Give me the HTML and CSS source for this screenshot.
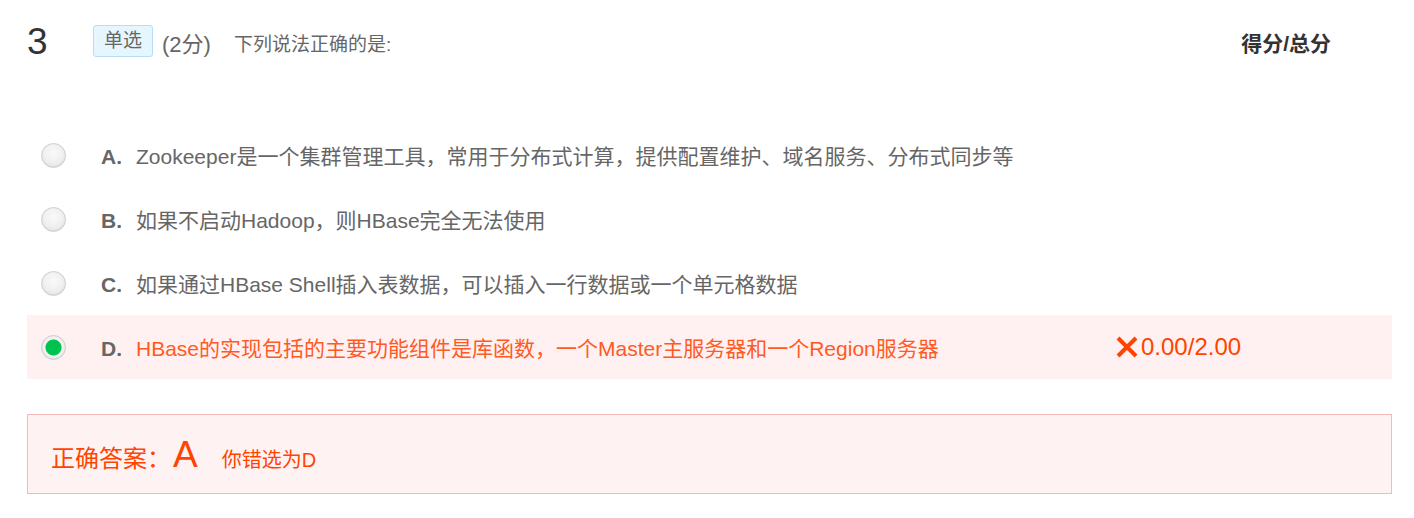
FILE: index.html
```html
<!DOCTYPE html>
<html lang="zh">
<head>
<meta charset="utf-8">
<link rel="stylesheet" href="styles.css">
</head>
<body>
<div class="question">
  <div class="q-head">
    <span class="q-num">3</span>
    <span class="q-tag">单选</span>
    <span class="q-score">(2分)</span>
    <span class="q-title">下列说法正确的是:</span>
    <span class="q-total">得分/总分</span>
  </div>
  <ul class="options">
    <li class="option">
      <span class="radio"></span>
      <span class="opt-body">
        <span class="opt-letter">A.</span>
        <span class="opt-text">Zookeeper是一个集群管理工具，常用于分布式计算，提供配置维护、域名服务、分布式同步等</span>
      </span>
    </li>
    <li class="option">
      <span class="radio"></span>
      <span class="opt-body">
        <span class="opt-letter">B.</span>
        <span class="opt-text">如果不启动Hadoop，则HBase完全无法使用</span>
      </span>
    </li>
    <li class="option">
      <span class="radio"></span>
      <span class="opt-body">
        <span class="opt-letter">C.</span>
        <span class="opt-text">如果通过HBase Shell插入表数据，可以插入一行数据或一个单元格数据</span>
      </span>
    </li>
    <li class="option option-wrong">
      <span class="radio radio-checked"></span>
      <span class="opt-body">
        <span class="opt-letter">D.</span>
        <span class="opt-text">HBase的实现包括的主要功能组件是库函数，一个Master主服务器和一个Region服务器</span>
      </span>
      <span class="opt-result">
        <svg class="x-icon" width="24" height="22" viewBox="0 0 24 22"><path d="M3 2 L21 20 M21 2 L3 20" stroke="#ff4400" stroke-width="4" fill="none"/></svg>0.00/2.00
      </span>
    </li>
  </ul>
  <div class="answer">
    <span class="ans-label">正确答案：</span>
    <span class="ans-value">A</span>
    <span class="ans-note">你错选为D</span>
  </div>
</div>
</body>
</html>
```
FILE: styles.css
```css
* { box-sizing: border-box; }
body {
  margin: 0;
  background: #fff;
  font-family: "Liberation Sans", Arial, "Noto Sans CJK SC", sans-serif;
  color: #666;
}
.question {
  width: 1392px;
  padding: 22px 0 0 27px;
}
.q-head {
  display: flex;
  align-items: center;
  height: 40px;
}
.q-num {
  font-size: 37px;
  color: #333;
  width: 66px;
  line-height: 40px;
}
.q-tag {
  height: 32px;
  line-height: 30px;
  padding: 0 10px;
  font-size: 19px;
  color: #666;
  background: #e6f6fe;
  border: 1px solid #b7def4;
  border-radius: 3px;
  margin-top: -2px;
}
.q-score {
  font-size: 22px;
  color: #666;
  margin-left: 9px;
}
.q-title {
  font-size: 19px;
  color: #666;
  margin-left: 23px;
}
.q-total {
  font-size: 21px;
  font-weight: bold;
  color: #333;
  margin-left: auto;
  margin-right: 61px;
}
.options {
  list-style: none;
  margin: 61px 0 0;
  padding: 0;
}
.option {
  display: flex;
  align-items: center;
  height: 64px;
  padding-left: 14px;
}
.option-wrong {
  background: #fff1f1;
}
.radio {
  width: 25px;
  height: 25px;
  border-radius: 50%;
  border: 1px solid #cfcfcf;
  background: radial-gradient(circle at 50% 40%, #fafafa 0%, #ececec 70%, #e0e0e0 100%);
  box-shadow: inset 0 -1px 2px rgba(0,0,0,0.08);
  flex: 0 0 25px;
}
.radio-checked {
  background: radial-gradient(circle, #00c24e 0 7.5px, #f3f3f3 8.5px, #e6e6e6 100%);
  border-color: #cccccc;
}
.opt-body {
  display: flex;
  align-items: baseline;
  flex: 0 0 1014px;
  margin-left: 35px;
}
.opt-letter {
  font-size: 21px;
  font-weight: bold;
  color: #666;
  width: 35px;
}
.opt-text {
  font-size: 21px;
  color: #666;
}
.option-wrong .opt-text {
  color: #ff5a24;
}
.opt-result {
  display: flex;
  align-items: center;
  font-size: 24px;
  color: #ff4400;
}
.x-icon {
  margin-right: 2px;
}
.answer {
  margin-top: 35px;
  height: 80px;
  border: 1px solid #f6b9b9;
  background: #fff2f2;
  display: flex;
  align-items: baseline;
  padding: 19px 0 0 23px;
  color: #ff4400;
}
.ans-label {
  font-size: 24px;
}
.ans-value {
  font-size: 37px;
  margin-left: 2px;
}
.ans-note {
  font-size: 20px;
  margin-left: 24px;
}
```
